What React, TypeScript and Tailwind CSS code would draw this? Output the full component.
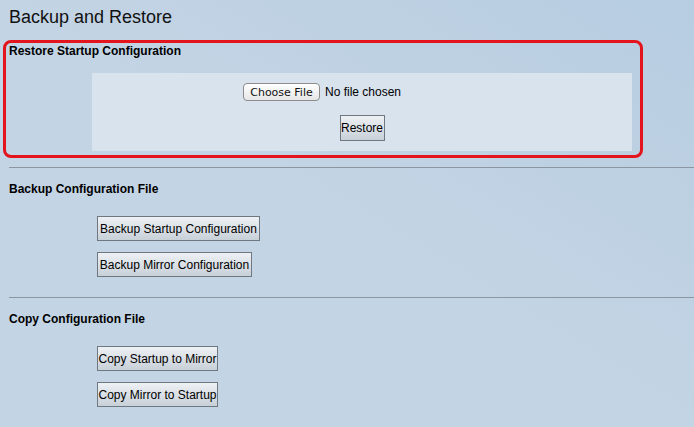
import React from 'react';

const font = { fontFamily: '"Liberation Sans", Arial, sans-serif' };

const GrayButton: React.FC<{ label: string; width: string }> = ({ label, width }) => (
  <button
    className={`${width} h-[25px] border border-[#6f7880] bg-gradient-to-b from-[#eef1f4] to-[#c8d0d8] text-[12px] text-black leading-none whitespace-nowrap px-0`}
  >
    {label}
  </button>
);

const SectionTitle: React.FC<{ text: string }> = ({ text }) => (
  <h2 className="text-[12px] font-bold text-black leading-[14px]">{text}</h2>
);

const App: React.FC = () => {
  return (
    <div
      className="w-[694px] h-[427px] overflow-hidden bg-gradient-to-bl from-[#b7cde1] via-[#c3d4e4] to-[#c3d4e4]"
      style={font}
    >
      <h1 className="pl-[9px] pt-[7px] text-[18px] leading-[21px] text-[#111]">Backup and Restore</h1>

      {/* Restore section, outlined in red */}
      <section className="ml-[3px] mt-[12px] w-[640px] h-[118px] border-[3px] border-[#e3141c] rounded-[8px] flex flex-col">
        <div className="pl-[3px] pt-[1px]">
          <SectionTitle text="Restore Startup Configuration" />
        </div>
        <div className="ml-[86px] mr-[8px] mt-[15px] h-[78px] bg-[#d8e3ee] flex flex-col items-center">
          <div className="w-[238px] mt-[10px] flex items-center h-[18px]">
            <button
              className="h-[18px] w-[77px] rounded-[4px] border border-[#8d8d8d] bg-gradient-to-b from-white to-[#e6e6e6] text-[11px] leading-none text-[#111] px-0"
              style={{ fontFamily: '"DejaVu Sans", sans-serif' }}
            >
              Choose File
            </button>
            <span className="ml-[5px] text-[12px] text-black">No file chosen</span>
          </div>
          <div className="mt-[14px]">
            <GrayButton label="Restore" width="w-[45px] h-[26px]" />
          </div>
        </div>
      </section>

      <hr className="ml-[9px] mt-[9px] border-0 border-t border-[#8c96a1]" />

      <section className="pl-[9px]">
        <div className="pt-[14px]">
          <SectionTitle text="Backup Configuration File" />
        </div>
        <div className="pl-[88px] pt-[20px] flex flex-col items-start gap-[11px]">
          <GrayButton label="Backup Startup Configuration" width="w-[163px]" />
          <GrayButton label="Backup Mirror Configuration" width="w-[155px]" />
        </div>
      </section>

      <hr className="ml-[9px] mt-[20px] border-0 border-t border-[#8c96a1]" />

      <section className="pl-[9px]">
        <div className="pt-[14px]">
          <SectionTitle text="Copy Configuration File" />
        </div>
        <div className="pl-[88px] pt-[20px] flex flex-col items-start gap-[11px]">
          <GrayButton label="Copy Startup to Mirror" width="w-[121px]" />
          <GrayButton label="Copy Mirror to Startup" width="w-[121px]" />
        </div>
      </section>
    </div>
  );
};

export default App;
